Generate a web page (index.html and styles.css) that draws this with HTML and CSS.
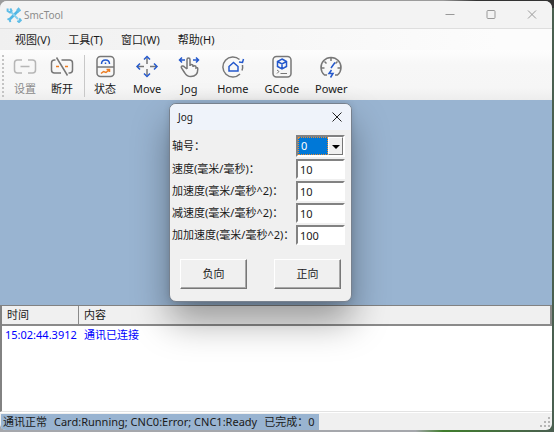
FILE: index.html
```html
<!DOCTYPE html>
<html lang="zh-cn">
<head>
<meta charset="utf-8">
<title>SmcTool</title>
<link rel="stylesheet" href="styles.css">
</head>
<body>
<div class="window">
	<!-- S 标题栏 -->
	<div class="titlebar">
		<svg class="logo" viewBox="0 0 16 16" width="16" height="16"><path d="M3 13 12 4" stroke="#4fb6e4" stroke-width="2.6"/><path d="M4 4l8 8" stroke="#86cfee" stroke-width="2"/><path d="M1.600 1.500v2.500l2.400 1.400 1.600-1.600L4.300 1.400M14.600 2.800l-2.100 1.500-1-1.200L13.200 1M1.500 12l2.200.5.600 2.600M11.400 13.800l1.600 1.200 1.700-1.700-1.500-1.800" fill="none" stroke="#5fbde7" stroke-width="2"/></svg>
		<span class="name">SmcTool</span>
		<button class="bt_win" aria-label="最小化"><svg viewBox="0 0 10 10" width="10" height="10"><path d="M0.500 4.500h9"/></svg></button>
		<button class="bt_win" aria-label="最大化"><svg viewBox="0 0 10 10" width="10" height="10"><rect x="1" y=".5" width="8" height="8" rx="1"/></svg></button>
		<button class="bt_win" aria-label="关闭"><svg viewBox="0 0 10 10" width="10" height="10"><path d="M1 .5l8 8M9 .5l-8 8"/></svg></button>
	</div>
	<!-- E 标题栏 -->
	<div class="menubar">
		<button>视图(V)</button>
		<button>工具(T)</button>
		<button>窗口(W)</button>
		<button>帮助(H)</button>
	</div>
	<!-- S 工具栏 -->
	<div class="toolbar">
		<div class="group">
			<button disabled>
				<svg viewBox="0 0 24 24" width="24" height="24"><path class="g" d="M9 5H4.500Q1.500 5 1.500 8v7q0 3 3 3H9M15 5h4.500q3 0 3 3v7q0 3-3 3H15M7.500 11.500h9"/></svg>
				<span>设置</span>
			</button>
			<button>
				<svg viewBox="0 0 24 24" width="24" height="24"><path class="g" d="M5.500 5h-1Q1.500 5 1.500 8v7q0 3 3 3H11M11.500 5h8q3 0 3 3v7q0 3-3 3H18.500M6.500 2.500l11 18"/><path class="o" d="M6 11.500h3M15 11.500h3"/></svg>
				<span>断开</span>
			</button>
		</div>
		<div class="group">
			<button>
				<svg viewBox="0 0 24 24" width="24" height="24"><rect class="g" x="4" y="1.500" width="17" height="20" rx="3.500"/><path class="g" d="M4 12h17"/><path class="b" d="M8.500 9q0-4 4-4t4 4M12.500 9V7.500"/><path class="o" d="M8 18.500l2.500-2 2.500 1 3-2.500M13.500 14.500h3v2.500"/></svg>
				<span>状态</span>
			</button>
			<button>
				<svg viewBox="0 0 24 24" width="24" height="24"><path class="g" d="M12 3v6M12 14v6M3 11.500h6M15 11.500h6"/><path class="b" d="M9 4.500l3-3 3 3M9 18.500l3 3 3-3M5 8.500l-3 3 3 3M19 8.500l3 3-3 3"/></svg>
				<span>Move</span>
			</button>
			<button>
				<svg viewBox="0 0 24 24" width="24" height="24"><path class="b" d="M8 5H3M16 5h5M5 2.500L2.500 5 5 7.500M19 2.500L21.500 5 19 7.500"/><path class="g" d="M10 14V4.500q0-1.500 1.500-1.500T13 4.500V11q0-1.500 1.500-1.500T16 11v1q0-1.300 1.500-1.300T19 12v1q1.800-1 1.800 1 0 7.500-7 7.500-4 0-6-3.500l-3.300-5q-.7-1.500.7-2 1.300-.3 2.300 1L10 14"/></svg>
				<span>Jog</span>
			</button>
			<button>
				<svg viewBox="0 0 24 24" width="24" height="24"><path class="g" d="M18.500 4.500A10 10 0 1 0 19 19M21.500 10q.5 3-.5 5.500"/><path class="b" d="M8 11.500l4.500-4 4.500 4V16H8zM18 7l3.500.5L22.500 4"/></svg>
				<span>Home</span>
			</button>
			<button>
				<svg viewBox="0 0 24 24" width="24" height="24"><rect class="g" x="3" y="1.500" width="18" height="20.500" rx="3.500"/><path class="b" d="M12 4l4.500 2.500v5L12 14l-4.500-2.500v-5zM7.500 6.500L12 9l4.500-2.500M12 9v5"/><path class="g thin" d="M7 15l2 1.500L7 18.500M10.500 18.500H17"/></svg>
				<span>GCode</span>
			</button>
			<button>
				<svg viewBox="0 0 24 24" width="24" height="24"><path class="g" d="M8 20H5.500A10 10 0 1 1 18.500 20H16M12 3v3M2.500 13h3M18.500 13h3M5.500 6.500l2 2M18.500 6.500l-2 2"/><path class="b" d="M12 13l4-5.500M12.500 15l-2.500 3.500h4L11.500 22.500"/></svg>
				<span>Power</span>
			</button>
		</div>
	</div>
	<!-- E 工具栏 -->
	<div class="workspace"></div>
	<!-- S 日志 -->
	<div class="log">
		<table>
			<thead><tr><th class="time">时间</th><th>内容</th></tr></thead>
			<tbody><tr><td>15:02:44.3912</td><td>通讯已连接</td></tr></tbody>
		</table>
	</div>
	<!-- E 日志 -->
	<div class="statusbar">
		<div class="status"><span>通讯正常</span><span>Card:Running; CNC0:Error; CNC1:Ready</span><span>已完成：0</span></div>
		<svg class="grip" viewBox="0 0 10 10" width="10" height="10"><path d="M8 0h2v2H8zM4 4h2v2H4zM8 4h2v2H8zM0 8h2v2H0zM4 8h2v2H4zM8 8h2v2H8z"/></svg>
	</div>
</div>

<!-- S Jog 对话框 -->
<form class="dialog">
	<div class="dialog_title">
		<span>Jog</span>
		<button type="button" class="bt_close" aria-label="关闭"><svg viewBox="0 0 10 10" width="10" height="10"><path d="M.5.5l9 9M9.500.5l-9 9"/></svg></button>
	</div>
	<div class="fields">
		<label for="axis">轴号：</label>
		<div class="select_box">
			<select id="axis"><option>0</option><option>1</option></select>
			<span class="arrow"></span>
		</div>
		<label for="speed">速度(毫米/毫秒)：</label>
		<input id="speed" type="text" value="10">
		<label for="acc">加速度(毫米/毫秒^2)：</label>
		<input id="acc" type="text" value="10">
		<label for="dec">减速度(毫米/毫秒^2)：</label>
		<input id="dec" type="text" value="10">
		<label for="jerk">加加速度(毫米/毫秒^2)：</label>
		<input id="jerk" type="text" value="100">
	</div>
	<div class="op">
		<button type="button">负向</button>
		<button type="button">正向</button>
	</div>
</form>
<!-- E Jog 对话框 -->
</body>
</html>
```

FILE: styles.css
```css
*{box-sizing:border-box;}
body{display:flex;height:100vh;margin:0;padding:1px 2px 2px 0;overflow:hidden;background:linear-gradient(90deg,#9c9c9c 80%,#333 86%) 0 0/100% 8px no-repeat,linear-gradient(90deg,#a5a7ac 75%,#3f7d2c 80%,#4a5f50);font:11px/16px "Noto Sans","Noto Sans CJK SC",sans-serif;color:#1a1a1a;}
button,input,select{margin:0;padding:0;border:0;border-radius:0;background:none;font:inherit;color:inherit;}
svg{display:block;fill:none;}

.window{display:flex;flex:1;flex-direction:column;min-width:0;overflow:hidden;border-radius:7px 7px 6px 6px;background:#f0f0f0;}

/* 标题栏 */
.titlebar{display:flex;align-items:center;height:28px;padding-left:6px;border-bottom:1px solid #dedede;background:#f3f3f3;}
.titlebar .name{flex:1;margin-left:2px;font-size:10px;color:#8c8c8c;}
.bt_win{display:flex;align-items:center;justify-content:center;width:41px;height:27px;}
.bt_win svg{stroke:#999;}

.menubar{display:flex;gap:18px;height:21px;padding-left:15px;background:linear-gradient(90deg,#f0f0f0,#fcfcfc 90%);}

/* 工具栏 */
.toolbar{display:flex;align-items:center;height:50px;padding:1px 4px 0 2px;background:linear-gradient(#fdfdfd,#f7f7f7 30%,#f6f6f6 75%,#ededed);}
.toolbar:before{width:2px;height:42px;background:repeating-linear-gradient(#c4c4c4 0 2px,transparent 2px 4px);content:"";}
.toolbar .group{display:flex;gap:16px;padding-left:8px;}
.toolbar .group:first-child{gap:13px;padding:0 10px 0 9px;border-right:1px solid #c8c8c8;}
.toolbar button{display:flex;flex-direction:column;align-items:center;gap:2px;min-width:24px;}
.toolbar button:disabled{color:#8a8a8a;}
.toolbar button:disabled svg{opacity:.5;}
.toolbar path,.toolbar rect{stroke-width:1.5;}
.g{stroke:#777;}
.b{stroke:#2458cc;}
.o{stroke:#ed7d22;}
.toolbar .thin{stroke-width:1;}

.workspace{flex:1;background:#99b4d1;}

/* 日志 */
.log{height:107px;border:1px solid #828282;border-width:1px 0 1px 2px;border-bottom-color:#e3e3e3;background:#fff;}
.log table{width:100%;border-collapse:separate;border-spacing:0;}
.log th{height:20px;padding:0 5px;border-right:2px solid #8a8a8a;border-bottom:2px solid #8a8a8a;background:#f0f0f0;font-weight:normal;text-align:left;}
.log .time{width:77px;border-right-width:1px;}
.log td{padding:1px 0 0 3px;color:#00f;}
.log td + td{padding-left:5px;}

.statusbar{display:flex;align-items:center;justify-content:space-between;height:18px;padding:0 2px 0 1px;border-top:1px solid #fff;}
.status{display:flex;gap:7px;padding:0 4px 0 2px;background:#99b4d1;white-space:nowrap;}
.grip{fill:#b5b5b5;}

/* 对话框 */
.dialog{position:absolute;left:169px;top:103px;width:183px;overflow:hidden;border:1px solid #77818e;border-radius:7px;background:#f0f0f0;box-shadow:0 20px 36px rgba(0,0,0,.36),0 0 6px rgba(0,0,0,.12);}
.dialog_title{display:flex;align-items:center;justify-content:space-between;height:26px;padding-left:8px;background:#eff3fa;font-size:10px;}
.bt_close{width:28px;height:26px;padding-left:9px;}
.bt_close svg{stroke:#222;}
.fields{display:grid;grid-template-columns:1fr 49px;gap:2px 0;align-items:center;padding:5px 6px 0 2px;}
.fields label{white-space:nowrap;}
.fields input{width:100%;height:20px;padding-left:2px;border:2px solid;border-color:#828282 #fff #fff #828282;background:#fff;}
.select_box{position:relative;height:22px;border:2px solid;border-color:#828282 #fff #fff #828282;background:#fff;}
.select_box select{width:30px;height:18px;padding-left:2px;border:1px dotted #e88b30;background:#0078d7;color:#fff;line-height:16px;appearance:none;}
.arrow{position:absolute;top:0;right:0;width:15px;height:18px;border:1px solid;border-color:#fff #777 #777 #fff;background:#f0f0f0;pointer-events:none;}
.arrow:after{display:block;margin:7px 0 0 3px;width:0;border:4px solid transparent;border-top-color:#000;border-bottom:0;content:"";}
.dialog .op{display:flex;justify-content:space-between;padding:14px 10px 12px;}
.dialog .op button{width:67px;height:30px;border:1px solid;border-color:#fff #777 #777 #fff;box-shadow:inset -1px -1px 0 #a8a8a8;}
```
